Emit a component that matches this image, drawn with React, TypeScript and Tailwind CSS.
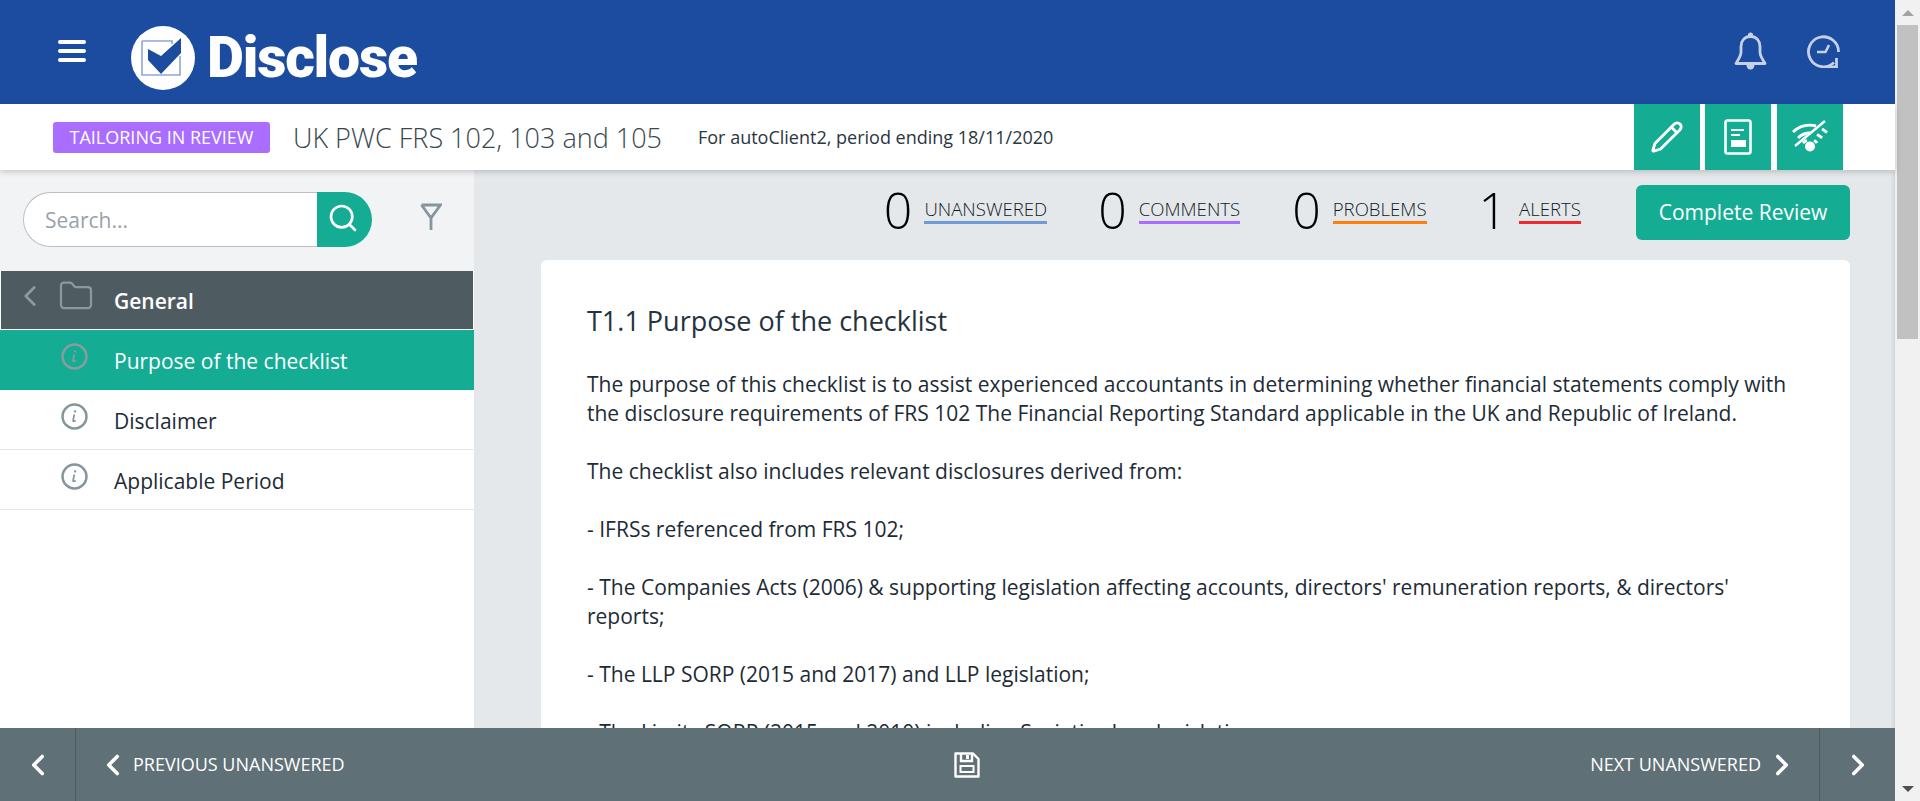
import { ChevronLeft, ChevronRight, Folder, Pencil, Search } from "lucide-react";

const font = { fontFamily: '"Open Sans", sans-serif' };

function InfoIcon({ className }: { className: string }) {
  return (
    <svg viewBox="0 0 28 28" className={className} fill="none" stroke="currentColor">
      <circle cx="14" cy="14" r="12.4" strokeWidth="2.6" />
      <path d="M13.6 12.5 L12.6 18.2 Q12.5 19.6 14.6 18.6" strokeWidth="1.8" strokeLinecap="round" />
      <circle cx="14.6" cy="8.8" r="1.2" fill="currentColor" stroke="none" />
    </svg>
  );
}

function Logo() {
  return (
    <div className="flex items-center">
      <svg viewBox="0 0 64 64" className="w-16 h-16">
        <circle cx="32" cy="32" r="32" fill="#fff" />
        <path d="M11 15 H41 V18 M49 30 V49 H11 V15" fill="none" stroke="#8ea6d2" strokeWidth="1.6" />
        <path d="M17 23 L30 30 L50 12 V27 L30 48 L17 34 Z" fill="#1c4c9f" />
      </svg>
      <span className="ml-[12px] text-[57px] leading-none font-black text-white tracking-[-1.2px] mt-[-2px]" style={{ fontFamily: "Roboto, sans-serif" }}>
        Disclose
      </span>
    </div>
  );
}

function Stat({ value, label, bar, className }: { value: string; label: string; bar: string; className: string }) {
  return (
    <div className={`flex items-center ${className}`}>
      <span className="text-[50px] leading-none font-light text-black">{value}</span>
      <span className={`ml-[12px] border-b-[3px] text-[18.6px] leading-[24px] font-light text-[#0f1a24] ${bar}`}>{label}</span>
    </div>
  );
}

function TreeRow({ label, active }: { label: string; active?: boolean }) {
  return (
    <div className={`flex h-[60px] ${active ? "bg-[#14ad94] text-white" : "bg-white text-[#1d2b36] border-b border-[#e6e8ea]"}`}>
      <InfoIcon className={`w-[27px] h-[27px] ml-[61px] mt-[13px] ${active ? "text-[#8b9ba0]" : "text-[#84959d]"}`} />
      <span className="ml-[26px] mt-[17px] text-[21px] leading-[28px]">{label}</span>
    </div>
  );
}

function ActionButton({ children, className }: { children: React.ReactNode; className?: string }) {
  return <div className={`w-[66px] h-[66px] bg-[#14ad94] flex items-center justify-center text-white ${className ?? ""}`}>{children}</div>;
}

export default function App() {
  return (
    <div className="flex h-[801px] overflow-hidden bg-white" style={font}>
      <div className="flex-1 min-w-0 flex flex-col">
        {/* header */}
        <header className="h-[104px] shrink-0 bg-[#1c4c9f] flex items-start pl-[58px] pr-[55px]">
          <div className="flex flex-col gap-[5px] w-[28px] mt-[40px]">
            <span className="h-[4px] rounded-full bg-white" />
            <span className="h-[4px] rounded-full bg-white" />
            <span className="h-[4px] rounded-full bg-white" />
          </div>
          <div className="ml-[45px] mt-[26px]">
            <Logo />
          </div>
          <div className="ml-auto mt-[32px] flex items-start gap-[40px] text-[#c6d1e6]">
            <svg viewBox="0 0 33 38" className="w-[33px] h-[38px]" fill="none" stroke="currentColor" strokeWidth="2.8">
              <path d="M16.5 4.5 C10.5 4.5 7 9 7 14.5 V20 C7 24.5 4 27.5 2 31.5 H31 C29 27.5 26 24.5 26 20 V14.5 C26 9 22.5 4.5 16.5 4.5 Z" strokeLinejoin="round" />
              <circle cx="16.5" cy="3" r="2.6" fill="currentColor" stroke="none" />
              <path d="M12.5 33 H20.5 A4 4.5 0 0 1 12.5 33 Z" fill="currentColor" stroke="none" />
            </svg>
            <svg viewBox="0 0 33 33" className="w-[33px] h-[33px] mt-[3px]" fill="none" stroke="currentColor" strokeWidth="2.8">
              <path d="M31.5 17 A15 15 0 1 0 27 27.5" />
              <path d="M29.5 23 V32 H20" />
              <path d="M10 17 H18.5 L22 10" strokeWidth="2.6" strokeLinejoin="round" />
            </svg>
          </div>
        </header>

        {/* sub bar */}
        <div className="relative z-10 h-[66px] shrink-0 bg-white shadow-[0_2px_6px_rgba(0,0,0,0.18)] flex pl-[53px] pr-[52px]">
          <span className="self-center mt-[1px] h-[31px] w-[217px] rounded-[3px] bg-[#a96dff] text-white text-[18px] leading-[31px] text-center">TAILORING IN REVIEW</span>
          <span className="self-center ml-[23px] text-[27px] font-light text-[#3a474f] leading-none">UK PWC FRS 102, 103 and 105</span>
          <span className="self-center ml-[36px] text-[18px] text-[#2a3640]">For autoClient2, period ending 18/11/2020</span>
          <div className="ml-auto flex gap-[5px]">
            <ActionButton>
              <Pencil className="w-[34px] h-[34px]" strokeWidth={2} />
            </ActionButton>
            <ActionButton>
              <svg viewBox="0 0 28 36" className="w-[28px] h-[36px]" fill="none" stroke="currentColor">
                <rect x="1.5" y="1.5" width="25" height="33" rx="2" strokeWidth="2.6" />
                <path d="M7 11 H20 M7 16 H16" strokeWidth="1.8" />
                <rect x="7" y="21" width="15" height="7" fill="currentColor" stroke="none" />
              </svg>
            </ActionButton>
            <ActionButton className="ml-[1px]">
              <svg viewBox="0 0 36 34" className="w-[36px] h-[34px]" fill="none" stroke="currentColor" strokeWidth="3">
                <path d="M1 12 A24 24 0 0 1 24 6 M30 9 Q32.5 10.5 35 12.5" />
                <path d="M6 18 A17 17 0 0 1 19 13 M25 14.5 Q28 16 30 18" />
                <path d="M11 23 A10 10 0 0 1 15 20.5 M22 20.5 Q24 21.5 25 23" />
                <path d="M3 26 L33 1" strokeWidth="2.4" />
                <circle cx="18" cy="26.5" r="5" fill="currentColor" stroke="none" />
              </svg>
            </ActionButton>
          </div>
        </div>

        {/* body */}
        <div className="flex-1 min-h-0 flex overflow-hidden">
          <aside className="w-[474px] shrink-0 bg-white flex flex-col">
            <div className="h-[101px] shrink-0 bg-[#f2f3f5] flex pl-[23px] pt-[22px]">
              <div className="w-[294px] h-[55px] bg-white border border-[#b9c0c5] border-r-0 rounded-l-full pl-[21px] text-[21px] leading-[55px] text-[#99a2a8]">Search...</div>
              <div className="w-[55px] h-[55px] bg-[#14ad94] rounded-r-full flex items-center justify-center text-white">
                <Search className="w-[32px] h-[32px] ml-[-3px] mt-[-3px]" strokeWidth={2} />
              </div>
              <svg viewBox="0 0 22 28" className="w-[22px] h-[28px] ml-[48px] mt-[11px] text-[#84959d]" fill="none" stroke="currentColor" strokeWidth="2.8">
                <path d="M1.5 2 H20.5 L11 15 V27 M11 15 L1.5 2" />
              </svg>
            </div>
            <div className="h-[59px] shrink-0 mx-[1px] border-b border-white bg-[#4e5c62] flex text-white">
              <ChevronLeft className="w-[34px] h-[34px] ml-[12px] mt-[8px] text-[#8b999f]" strokeWidth={2} />
              <Folder className="w-[36px] h-[36px] ml-[11px] mt-[7px] text-[#8b999f]" strokeWidth={1.5} />
              <span className="ml-[20px] mt-[16px] text-[21px] leading-[28px] font-semibold">General</span>
            </div>
            <TreeRow label="Purpose of the checklist" active />
            <TreeRow label="Disclaimer" />
            <TreeRow label="Applicable Period" />
          </aside>

          <main className="flex-1 min-w-0 bg-[#e5e8eb] pl-[67px] pr-[45px] shadow-[inset_-4px_0_4px_-3px_rgba(0,0,0,0.12)]">
            <div className="h-[90px] flex items-start justify-end pt-[15px]">
              <Stat value="0" label="UNANSWERED" bar="border-[#6f9bd6]" className="" />
              <Stat value="0" label="COMMENTS" bar="border-[#a96dff]" className="ml-[51px]" />
              <Stat value="0" label="PROBLEMS" bar="border-[#ff7f0e]" className="ml-[52px]" />
              <Stat value="1" label="ALERTS" bar="border-[#f0272d]" className="ml-[52px]" />
              <button className="ml-[55px] w-[214px] h-[55px] rounded-[6px] bg-[#14ad94] text-white text-[21px]">Complete Review</button>
            </div>
            <article className="bg-white rounded-[6px] px-[46px] pt-[43px] pb-10 text-[21px] leading-[29px] text-[#1d2b36]">
              <h1 className="text-[27px] leading-[36px] mb-[31px] font-normal text-[#25333e]">T1.1 Purpose of the checklist</h1>
              <p>The purpose of this checklist is to assist experienced accountants in determining whether financial statements comply with the disclosure requirements of FRS 102 The Financial Reporting Standard applicable in the UK and Republic of Ireland.</p>
              <p className="mt-[29px]">The checklist also includes relevant disclosures derived from:</p>
              <p className="mt-[29px]">- IFRSs referenced from FRS 102;</p>
              <p className="mt-[29px]">- The Companies Acts (2006) &amp; supporting legislation affecting accounts, directors' remuneration reports, &amp; directors' reports;</p>
              <p className="mt-[29px]">- The LLP SORP (2015 and 2017) and LLP legislation;</p>
              <p className="mt-[29px]">- The Limits SORP (2015 and 2010) including Societies Law legislation;</p>
            </article>
          </main>
        </div>

        {/* footer */}
        <footer className="h-[73px] shrink-0 bg-[#607077] flex items-center text-white text-[18px]">
          <div className="w-[76px] h-full border-r border-[#4e5c62] flex items-center justify-center">
            <ChevronLeft className="w-[34px] h-[34px]" strokeWidth={2.5} />
          </div>
          <ChevronLeft className="w-[34px] h-[34px] ml-[20px]" strokeWidth={2.5} />
          <span className="ml-[3px]">PREVIOUS UNANSWERED</span>
          <div className="flex-1 flex justify-center">
            <svg viewBox="0 0 26 26" className="w-[26px] h-[26px]" fill="none" stroke="currentColor" strokeWidth="2.4">
              <path d="M1.5 1.5 H19 L24.5 7 V24.5 H1.5 Z" strokeLinejoin="round" />
              <path d="M7 2 V9 H18 V2" />
              <rect x="12" y="3" width="3" height="4" fill="currentColor" stroke="none" />
              <rect x="6.5" y="14" width="13" height="6" strokeWidth="2" />
            </svg>
          </div>
          <span>NEXT UNANSWERED</span>
          <ChevronRight className="w-[34px] h-[34px] ml-[4px]" strokeWidth={2.5} />
          <div className="ml-[20px] w-[76px] h-full border-l border-[#4e5c62] flex items-center justify-center">
            <ChevronRight className="w-[34px] h-[34px]" strokeWidth={2.5} />
          </div>
        </footer>
      </div>

      {/* page scrollbar */}
      <div className="w-[25px] shrink-0 bg-[#f1f1f1] flex flex-col items-center">
        <div className="h-[25px] w-full flex items-center justify-center">
          <span className="w-0 h-0 border-x-[6px] border-x-transparent border-b-[6px] border-b-[#a3a3a3]" />
        </div>
        <div className="w-[21px] h-[314px] bg-[#c1c1c1]" />
        <div className="mt-auto h-[25px] w-full flex items-center justify-center">
          <span className="w-0 h-0 border-x-[6px] border-x-transparent border-t-[6px] border-t-[#505050]" />
        </div>
      </div>
    </div>
  );
}
